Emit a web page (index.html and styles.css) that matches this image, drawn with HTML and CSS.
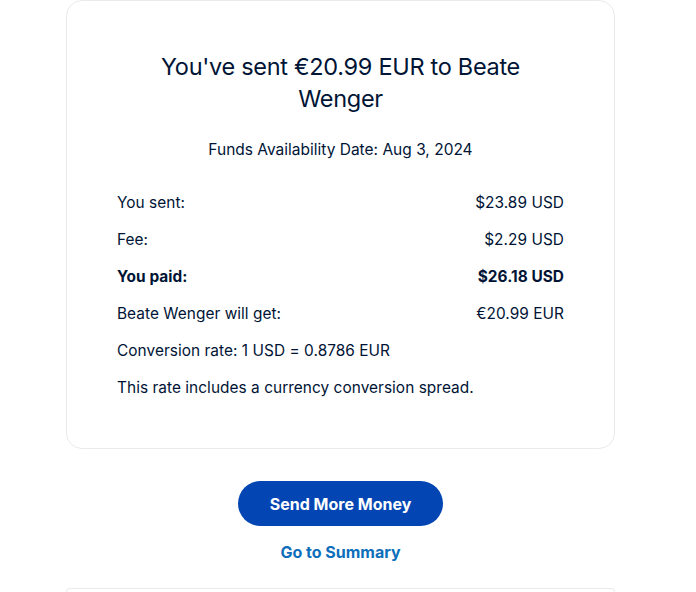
FILE: index.html
```html
<!DOCTYPE html>
<html>
<head>
<meta charset="utf-8">
<link rel="stylesheet" href="styles.css">
</head>
<body>
<div class="page">
  <div class="card">
    <h1 class="title">You've sent €20.99 EUR to Beate Wenger</h1>
    <p class="date">Funds Availability Date: Aug 3, 2024</p>
    <div class="rows">
      <div class="row"><span>You sent:</span><span>$23.89 USD</span></div>
      <div class="row"><span>Fee:</span><span>$2.29 USD</span></div>
      <div class="row bold"><span>You paid:</span><span>$26.18 USD</span></div>
      <div class="row"><span>Beate Wenger will get:</span><span>€20.99 EUR</span></div>
      <div class="row"><span>Conversion rate: 1 USD = 0.8786 EUR</span></div>
      <div class="row"><span>This rate includes a currency conversion spread.</span></div>
    </div>
  </div>
  <div class="actions">
    <button class="primary">Send More Money</button>
    <a class="link" href="#">Go to Summary</a>
  </div>
  <div class="card next"></div>
</div>
</body>
</html>
```
FILE: styles.css
```css
html, body {
  margin: 0;
  padding: 0;
  background: #fff;
}
body {
  font-family: Inter, "Liberation Sans", sans-serif;
  color: #001435;
}
.page {
  width: 549px;
  margin-left: 66px;
}
.card {
  border: 1px solid #e9eaec;
  border-radius: 16px;
  padding: 50px 50px 50px;
  box-sizing: border-box;
}
.title {
  margin: 0 auto;
  max-width: 400px;
  text-align: center;
  font-size: 23.5px;
  font-weight: 400;
  line-height: 32px;
  letter-spacing: -0.3px;
}
.date {
  margin: 25px 0 0;
  text-align: center;
  font-size: 15.5px;
  line-height: 20px;
}
.rows {
  margin-top: 33px;
  display: flex;
  flex-direction: column;
  gap: 17px;
}
.row {
  display: flex;
  justify-content: space-between;
  font-size: 15.4px;
  line-height: 20px;
  letter-spacing: 0.05px;
}
.row.bold {
  font-weight: 700;
}
.actions {
  display: flex;
  flex-direction: column;
  align-items: center;
  padding-top: 32px;
}
.primary {
  width: 205px;
  height: 45px;
  border: none;
  border-radius: 23px;
  background: #0346b3;
  color: #fff;
  font-family: inherit;
  font-size: 16px;
  font-weight: 700;
  cursor: pointer;
}
.link {
  margin-top: 16px;
  color: #0d6fbb;
  font-size: 16px;
  font-weight: 700;
  line-height: 20px;
  text-decoration: none;
}
.card.next {
  margin-top: 26px;
  height: 4px;
  padding: 0;
  border-bottom: none;
  border-radius: 16px 16px 0 0;
}
```
